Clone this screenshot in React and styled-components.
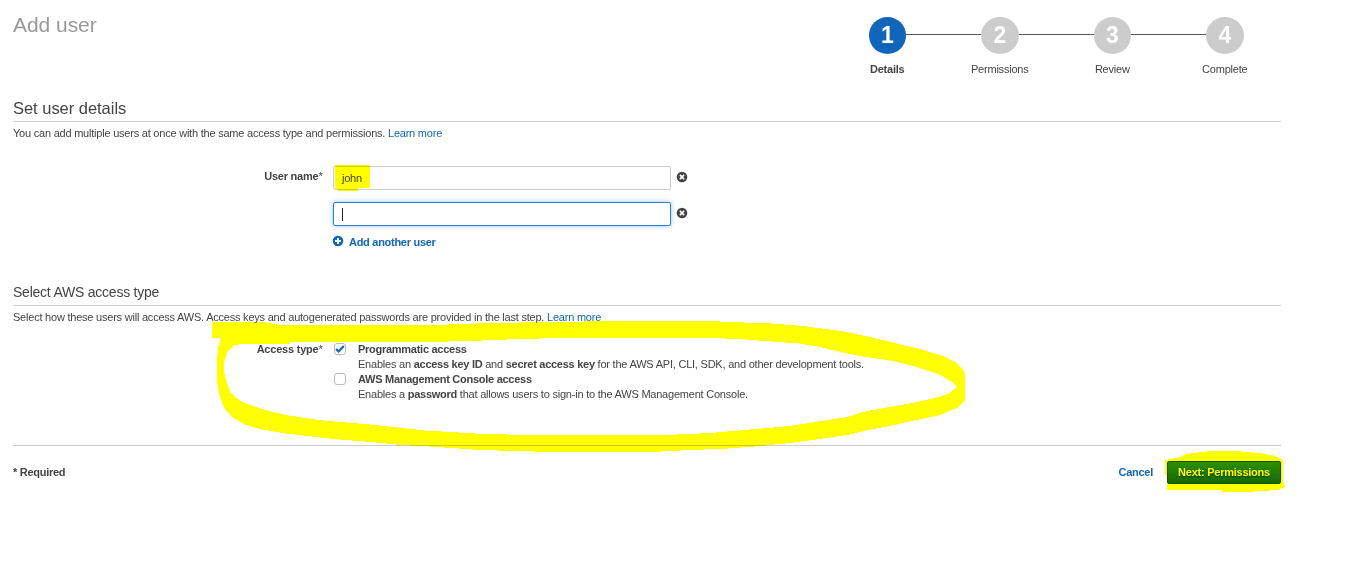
import React from 'react';
import styled, { createGlobalStyle } from 'styled-components';

const GlobalStyle = createGlobalStyle`
  * { box-sizing: border-box; }
  body {
    margin: 0;
    background: #fff;
    color: #444;
    font: 11px/15px "Liberation Sans", Arial, sans-serif;
    letter-spacing: -0.22px;
  }
  b, strong { letter-spacing: -0.27px; }
`;

const Page = styled.main`
  position: relative;
  width: 1346px;
  height: 561px;
  padding: 0 65px 0 13px;
  overflow: hidden;
`;

const Header = styled.header`
  display: flex;
  justify-content: space-between;
  height: 98px;
`;

const Title = styled.h1`
  margin: 0;
  padding-top: 13px;
  color: #999;
  font-size: 21px;
  line-height: 24px;
  font-weight: 400;
  letter-spacing: -0.05px;
`;

const Steps = styled.ol`
  display: flex;
  margin: 0;
  padding: 17px 0 0;
  list-style: none;
`;

const Step = styled.li`
  display: grid;
  grid-template-columns: 1fr 37.5px 1fr;
  grid-template-rows: 37px 15px;
  row-gap: 8px;
  align-items: center;
  width: 112.5px;
`;

const Connector = styled.span`
  height: 1px;
  margin-top: -2px;
  background: ${({ $on }) => ($on ? '#555' : 'transparent')};
`;

const Circle = styled.span`
  height: 37px;
  border-radius: 50%;
  background: ${({ $active }) => ($active ? '#1166bb' : '#ccc')};
  color: #fff;
  font-size: 23px;
  line-height: 36px;
  font-weight: 700;
  text-align: center;
`;

const StepLabel = styled.span`
  grid-column: 1 / 4;
  text-align: center;
  font-weight: ${({ $active }) => ($active ? 700 : 400)};
`;

const SectionTitle = styled.h2`
  margin: 0;
  height: ${({ $small }) => ($small ? 22 : 24)}px;
  border-bottom: 1px solid #ccc;
  font-size: ${({ $small }) => ($small ? 14 : 16.5)}px;
  line-height: ${({ $small }) => ($small ? 17 : 21)}px;
  font-weight: 400;
  letter-spacing: ${({ $small }) => ($small ? '-0.23px' : '-0.03px')};
`;

const Intro = styled.p`
  margin: 4px 0 0;
`;

const Link = styled.a`
  color: #1166bb;
  font-weight: ${({ $bold }) => ($bold ? 700 : 400)};
  letter-spacing: ${({ $bold }) => ($bold ? '-0.28px' : 'inherit')};
`;

const FormRow = styled.div`
  display: grid;
  grid-template-columns: 309.5px 1fr;
  column-gap: 10.5px;
  margin-top: ${({ $gap }) => $gap}px;
`;

const FieldLabel = styled.label`
  padding-top: ${({ $offset }) => $offset}px;
  text-align: right;
  font-weight: 700;
`;

const Star = styled.span`
  font-weight: 400;
`;

const Fields = styled.div`
  display: flex;
  flex-direction: column;
  gap: 12px;
`;

const Field = styled.div`
  display: flex;
  gap: 5px;
`;

const Input = styled.div`
  display: flex;
  align-items: center;
  width: 338px;
  height: 24px;
  padding-left: 8px;
  border: 1px solid ${({ $focus }) => ($focus ? '#2a7fdc' : '#ccc')};
  border-radius: 2px;
  box-shadow: ${({ $focus }) => ($focus ? '0 0 5px rgba(30, 120, 220, .45)' : 'none')};
`;

const Caret = styled.span`
  width: 1px;
  height: 13px;
  background: #222;
`;

const Icon = styled.svg`
  width: 12px;
  height: 12px;
  flex: none;
  margin-top: 5px;
  fill: ${({ $blue }) => ($blue ? '#1166bb' : '#444')};
`;

const AddUser = styled.div`
  display: flex;
  gap: 5px;
  margin-top: -3px;
  ${Icon} {
    margin-top: 0;
    margin-left: -1px;
  }
`;

const Options = styled.div`
  display: flex;
  flex-direction: column;
`;

const Option = styled.div`
  display: grid;
  grid-template-columns: 13px 1fr;
  column-gap: 12px;
`;

const Check = styled.span`
  display: flex;
  width: 12px;
  height: 12px;
  margin: 1px 0 0 1px;
  border: 1px solid #bbb;
  border-radius: 3px;
  background: #fff;

  svg {
    width: 10px;
    height: 10px;
  }
`;

const AccessSection = styled.section`
  margin-top: 34px;
`;

const Footer = styled.footer`
  display: flex;
  align-items: center;
  gap: 14px;
  height: 54px;
  margin-top: 43px;
  border-top: 1px solid #ccc;
`;

const Required = styled.strong`
  margin-right: auto;
`;

const Button = styled.button`
  width: 114px;
  height: 23px;
  padding: 0 0 1px;
  border: 1px solid #124f00;
  border-radius: 2px;
  background: linear-gradient(#2d8f0a, #156900);
  color: #fff;
  font: 700 11px/20px "Liberation Sans", Arial, sans-serif;
  letter-spacing: -0.24px;
  text-shadow: 0 1px 2px #063000;
`;

const Marker = styled.svg`
  position: absolute;
  inset: 0;
  fill: #ff0;
  mix-blend-mode: multiply;
  pointer-events: none;
`;

const RemoveIcon = () => (
  <Icon viewBox="0 0 12 12">
    <circle cx="6" cy="6" r="5.3" />
    <path d="M3.9 3.9l4.2 4.2M8.1 3.9l-4.2 4.2" stroke="#fff" strokeWidth="1.6" />
  </Icon>
);

const AddIcon = () => (
  <Icon $blue viewBox="0 0 12 12">
    <circle cx="6" cy="6" r="5.3" />
    <path d="M6 3v6M3 6h6" stroke="#fff" strokeWidth="1.9" />
  </Icon>
);

const Highlights = () => (
  <Marker width="1346" height="561" viewBox="0 0 1346 561" shapeRendering="crispEdges">
    <path d="M335 165H370V188H358V191H338V189H335Z" />
    <path
      fillRule="evenodd"
      d="M212 322L263 322L281 325H432L476 323.5L544 322L600 321.3H715L744 322.5L772 323.5L803 326L826 329L847 332L870 337L895 343L920 349L943 356L955 362L962 368L965 373V401L957 408L940 415L912 421L890 426L868 430L850 434.5L820 439L790 443L760 446L728 448.5L690 450L662 451.5H534L480 450L430 446.5L401 445L371 442L333 439L286 433.5L262 429.5L246 425L233 418L225 409L220 398L217.5 385L217 360L218 348L221 338H212Z M243 343.5L234 345.5L228 351L224.5 361L223.5 369L226 380L230 391L236 398L245 403L265 410L286 415L318 420L376 425L425 430.5L484 434L533 435H664L710 433L750 429.5L790 426L818 421.5L848 417L862 412L890 407L912 403L935 398L948 394L957 387L952 382L940 375L917 367L893 361L865 357L845 353L820 347L799 343.5L765 341L745 339.5L715 338L650 337.5L562 338L520 339L470 341L428 342H290V343.5Z"
    />
    <path d="M1165 460L1180 457L1186 454L1210 451H1236L1260 453L1275 456L1283 460V480L1285 487L1278 490L1248 492H1222V490H1167V475H1165Z" />
  </Marker>
);

const steps = ['Details', 'Permissions', 'Review', 'Complete'];

export default function App() {
  return (
    <Page>
      <GlobalStyle />
      <Header>
        <Title>Add user</Title>
        <Steps>
          {steps.map((name, i) => (
            <Step key={name}>
              <Connector $on={i > 0} />
              <Circle $active={i === 0}>{i + 1}</Circle>
              <Connector $on={i < 3} />
              <StepLabel $active={i === 0}>{name}</StepLabel>
            </Step>
          ))}
        </Steps>
      </Header>

      <SectionTitle>Set user details</SectionTitle>
      <Intro>
        You can add multiple users at once with the same access type and permissions. <Link>Learn more</Link>
      </Intro>
      <FormRow $gap={25}>
        <FieldLabel $offset={3}>User name<Star>*</Star></FieldLabel>
        <Fields>
          <Field><Input>john</Input><RemoveIcon /></Field>
          <Field><Input $focus><Caret /></Input><RemoveIcon /></Field>
          <AddUser>
            <AddIcon />
            <Link $bold>Add another user</Link>
          </AddUser>
        </Fields>
      </FormRow>

      <AccessSection>
        <SectionTitle $small>Select AWS access type</SectionTitle>
        <Intro>
          Select how these users will access AWS. Access keys and autogenerated passwords are provided in the last step. <Link>Learn more</Link>
        </Intro>
        <FormRow $gap={17}>
          <FieldLabel $offset={0}>Access type<Star>*</Star></FieldLabel>
          <Options>
            <Option>
              <Check>
                <svg viewBox="0 0 10 10">
                  <path d="M1 5l2.6 2.4L8.8 2" fill="none" stroke="#1166bb" strokeWidth="2.2" />
                </svg>
              </Check>
              <div>
                <strong>Programmatic access</strong><br />
                Enables an <b>access key ID</b> and <b>secret access key</b> for the AWS API, CLI, SDK, and other development tools.
              </div>
            </Option>
            <Option>
              <Check />
              <div>
                <strong>AWS Management Console access</strong><br />
                Enables a <b>password</b> that allows users to sign-in to the AWS Management Console.
              </div>
            </Option>
          </Options>
        </FormRow>
      </AccessSection>

      <Footer>
        <Required>* Required</Required>
        <Link $bold>Cancel</Link>
        <Button>Next: Permissions</Button>
      </Footer>

      <Highlights />
    </Page>
  );
}
